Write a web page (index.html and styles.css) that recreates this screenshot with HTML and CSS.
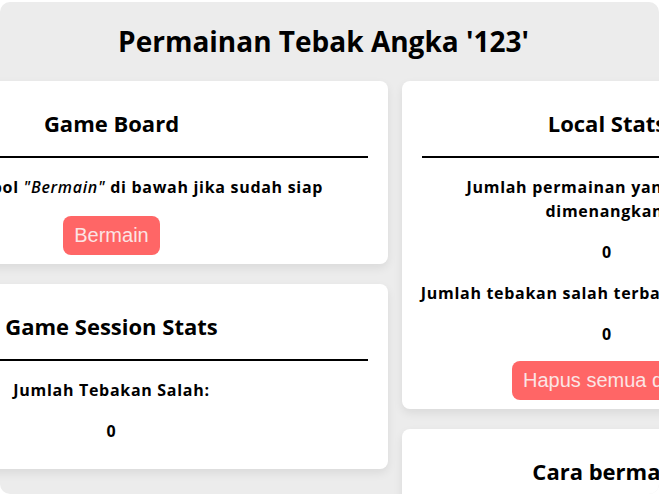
FILE: index.html
```html
<!DOCTYPE html>
<html lang="id">
<head>
<meta charset="utf-8">
<title>Permainan Tebak Angka '123'</title>
<link rel="stylesheet" href="styles.css">
</head>
<body>
<div class="frame">
  <div class="page">
    <header class="top">
      <h1 class="title">Permainan Tebak Angka '123'</h1>
    </header>
    <main class="columns">
      <div class="col col-left">
        <section class="card">
          <h2 class="card-title">Game Board</h2>
          <hr class="rule">
          <p class="text">Tekan tombol <em>"Bermain"</em> di bawah jika sudah siap</p>
          <button class="btn" type="button">Bermain</button>
        </section>
        <section class="card">
          <h2 class="card-title">Game Session Stats</h2>
          <hr class="rule">
          <p class="text">Jumlah Tebakan Salah:</p>
          <p class="text">0</p>
        </section>
      </div>
      <div class="col col-right">
        <section class="card">
          <h2 class="card-title">Local Stats</h2>
          <hr class="rule">
          <p class="text">Jumlah permainan yang berhasil dimenangkan:</p>
          <p class="text">0</p>
          <p class="text">Jumlah tebakan salah terbanyak sekaligus:</p>
          <p class="text text-tight">0</p>
          <button class="btn" type="button">Hapus semua data</button>
        </section>
        <section class="card">
          <h2 class="card-title">Cara bermain</h2>
          <hr class="rule">
          <p class="text">Tebak 3 angka rahasia secara berurutan.</p>
        </section>
      </div>
    </main>
  </div>
</div>
</body>
</html>
```
FILE: styles.css
```css
html, body {
  margin: 0;
  padding: 0;
  background: #ffffff;
  overflow: hidden;
}

body {
  font-family: "Open Sans", "Noto Sans", sans-serif;
  color: #000;
}

.frame {
  margin-top: 2px;
  height: 492px;
  background: #ececec;
  border-radius: 10px;
  overflow: hidden;
}

.page {
  width: 977px;
  margin-left: -165px;
}

.top {
  padding-top: 18px;
  text-align: center;
}

.title {
  margin: 0;
  font-size: 28px;
  line-height: 42px;
  font-weight: 700;
}

.columns {
  display: flex;
  gap: 14px;
  align-items: flex-start;
  margin-top: 19px;
}

.col {
  display: flex;
  flex-direction: column;
  gap: 20px;
}

.col-left { width: 553px; }
.col-right { width: 410px; }

.card {
  background: #ffffff;
  border-radius: 8px;
  box-shadow: 0 4px 10px rgba(0, 0, 0, 0.08);
  padding: 26px 10px 9px;
  text-align: center;
}

.card-title {
  margin: 0;
  font-size: 22px;
  line-height: 32px;
  font-weight: 700;
}

.rule {
  margin: 17px 10px 0;
  border: 0;
  height: 2px;
  background: #000;
}

.text {
  margin: 17px 0;
  font-size: 16px;
  line-height: 24px;
  font-weight: 700;
  letter-spacing: 0.7px;
}

.text-tight {
  margin: 15px 0;
}

.text em {
  font-weight: 600;
}

.btn {
  display: inline-block;
  height: 39px;
  padding: 0 11px;
  border: 0;
  border-radius: 8px;
  background: #ff6666;
  color: #fbe4e4;
  font-family: "Liberation Sans", Arial, sans-serif;
  font-size: 20px;
}
```
